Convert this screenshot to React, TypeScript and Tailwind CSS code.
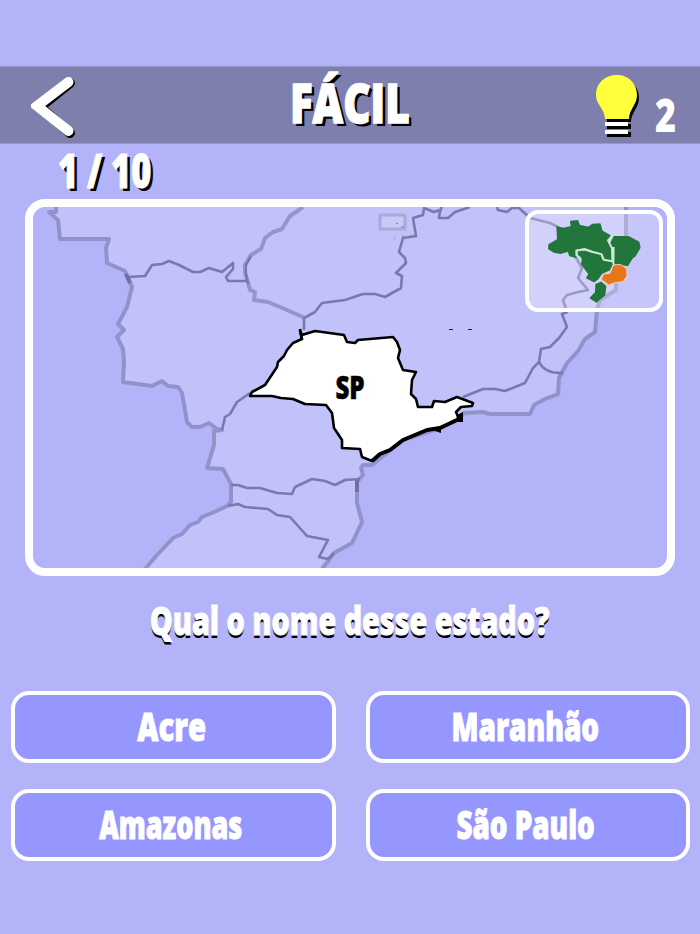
import { useState } from 'react';
import { clsx } from 'clsx';

const answers = [
  { label: 'Acre', scale: 'scale-x-[0.77]' },
  { label: 'Maranhão', scale: 'scale-x-[0.735]' },
  { label: 'Amazonas', scale: 'scale-x-[0.71]' },
  { label: 'São Paulo', scale: 'scale-x-[0.73]' },
];

const borders = [
  'M128 277L145 276L152 265L162 264L169 261L179 265L193 272L200 272L209 268L222 272L233 263L233 269L226 277L228 281L248 281',
  'M304 330L304 318L315 312L322 303L345 300L363 294L375 294L385 297L401 288L402 276L396 273L406 263L405 258L399 252L403 238L416 236L413 218L423 215L424 208L434 212L440 210L439 218L448 218L455 212L470 207M442 206L440 212',
  'M497 207L498 210L507 212L512 208L519 208L530 218L550 223L558 227L582 268L578 278L588 290L578 292L567 295L563 300L567 312L562 314L567 327L559 338L550 347L541 349L539 362L533 368L525 383L505 391L495 389L483 389L463 397',
  'M539 362Q545 374 563 373',
  'M231 485L238 485L247 488L260 488L277 493L292 494L295 487L312 479L325 481L335 485L345 480L360 479',
  'M228 506L238 504L245 507L268 509L277 515L290 517L307 536L328 540L319 557L328 559L334 553',
  'M250 393L237 402L230 414L225 417L222 430',
];

const saoPaulo =
  'M300 331L302 335L315 331L344 335L347 342L355 343L358 340L393 337L397 342L400 350L398 358L403 370L416 372L412 380L411 394L416 399L418 407L432 407L434 401L445 402L457 397L473 403L472 406L461 407L456 412L459 419L440 428L427 430L403 440L390 450L380 454L372 461L362 457L360 449L342 448L342 440L334 428L332 413L326 405L305 404L293 399L281 398L272 396L250 396L252 392L265 385L277 367L278 362L284 356L287 350L293 343L302 339Z';

const coast =
  'M626 206L626 240L616 283L616 290L600 300L597 310L595 332L585 339L578 351L567 363L559 378L558 394L545 399L534 405L530 414L490 414L483 412L464 413L459 419L440 428L403 440L372 465L363 465L361 468L363 475L357 482L357 503L362 522L352 543L334 553L322 569';

const westBorder =
  'L145 569L157 555L173 538L182 534L190 525L198 522L202 517L212 513L227 506L231 502L231 484L223 469L207 468L214 445L214 431L222 430L217 429L209 423L200 427L192 427L187 422L182 393L178 387L168 386L162 381L152 386L123 382L124 362L123 349L117 337L124 330L118 324L127 307L132 287L125 271L107 263L106 248L109 239L60 239L58 220L49 212L56 212L56 206';

function BackIcon() {
  return (
    <svg width="46" height="66" viewBox="0 0 46 66" fill="none" strokeLinecap="round" strokeWidth="10">
      <path d="M39 11L9 35L39 61" stroke="#000" />
      <path d="M37.500 10L6 34L37.500 59" stroke="#fff" />
    </svg>
  );
}

function BulbIcon() {
  const bulb = 'M21 0C9 0 0 8 0 20C0 30 9 34 9 44H33C33 34 41 30 41 20C41 8 32 0 21 0Z';
  return (
    <svg width="44" height="64" viewBox="0 0 44 64">
      <g transform="translate(2 3)">
        <path d={bulb} />
        <path d="M9 46H33V51H9ZM9 54H33V59H9Z" />
      </g>
      <path d={bulb} fill="#ffff3c" />
      <path d="M9 47H32V51H9ZM9 55H32V59H9Z" fill="#fff" />
    </svg>
  );
}

function StateMap() {
  return (
    <svg className="block h-full w-full" viewBox="33 207 634 361" fill="none" strokeLinejoin="round">
      <path d={coast + westBorder + 'Z'} fill="#c2c2fb" />
      <path d={coast} stroke="#9292ca" strokeWidth="4" />
      <path d={'M322 569M145 569' + westBorder} stroke="#9292ca" strokeWidth="4" />
      {/* divisa oeste de Goiás */}
      <path
        d="M303 207L299 210L290 216L282 229L273 232L265 238L261 249L251 255L245 265L245 273L248 282L250 290L255 292L254 300L268 302L287 310L305 318"
        stroke="#9595c6"
        strokeWidth="4"
      />
      <path d="M251 256L246 265L246 274L248 284" stroke="#7575a8" strokeWidth="2" />
      {borders.map((d) => (
        <path key={d} d={d} stroke="#7979ae" strokeWidth="2.6" />
      ))}
      <path d="M126 274L130 283M357 480L357 492" stroke="#7070a4" strokeWidth="4" />
      <rect x="380" y="215" width="25" height="14" fill="#c9c9fa" stroke="#aaaad5" strokeWidth="3" />
      <path d="M396 223.500H398M401 227H404M394 238H395M402 236H404" stroke="#8080b0" />
      <path d="M449 329.500H453M468 329.500H472" stroke="#222" />
      <path d={saoPaulo} fill="#fff" stroke="#000" strokeWidth="2.6" />
      <path d="M372 461L380 454L390 450L403 440L427 430L440 428L459 419" stroke="#000" strokeWidth="4" />
      <path d="M457 415L463 412V422H456ZM436 427L441 426V433L435 431Z" fill="#000" />
      <path d="M300 329L302 340" stroke="#000" strokeWidth="2.600" />
    </svg>
  );
}

function MiniMap() {
  return (
    <div className="absolute top-[3px] right-1 h-[102px] w-[138px] rounded-[13px] border-4 border-white bg-white/25">
      <svg className="block h-full w-full" viewBox="27 27 390 282" strokeLinejoin="round">
        <g fill="#23763b" stroke="#23763b" strokeWidth="4">
          <path d="M111 66L130 70L154 65L152 49L173 47L178 61L205 67L218 58L240 57L246 78L270 92L260 107L272 120L275 165L251 162L248 146L221 139L194 130L165 132L168 157L149 152L145 138L121 145L101 141L86 131L87 119L113 104Z" />
          <path d="M282 95L325 95L356 111L360 128L345 153L336 160L323 181L285 177L279 141L270 121Z" />
          <path d="M174 139L195 139L217 145L240 149L245 165L278 174L268 195L245 205L233 222L222 230L200 219L207 207L185 177L188 157L178 158Z" />
          <path d="M228 238L243 232L257 244L254 270L229 291L211 279L227 262Z" />
        </g>
        <path
          d="M182 160L169 150L169 137L193 132L219 141L245 148L251 164L277 169L276 130L264 106L278 91M281 126L280 177"
          fill="none"
          stroke="#c7ead3"
          strokeWidth="6"
        />
        <path
          d="M279 182L290 178L305 180L320 192L321 213L309 230L285 233L266 240L244 223L250 207L270 205Z"
          fill="#e9751b"
          stroke="#f2d1ba"
          strokeWidth="3"
        />
      </svg>
    </div>
  );
}

export default function App() {
  const [selected, setSelected] = useState<string | null>(null);

  return (
    <div className="h-[934px] w-[700px] overflow-hidden bg-[#b3b3fa] pt-[66px] font-['Open_Sans',sans-serif] font-extrabold text-white select-none">
      <header className="grid h-[78px] grid-cols-3 items-center border-y border-[#9696cc] bg-[#7f7fae]">
        <button className="ml-[31px] w-fit" aria-label="Voltar">
          <BackIcon />
        </button>
        <h1 className="flex justify-center pb-1.5 text-[54px] leading-none">
          <span className="scale-x-[0.78] [-webkit-text-stroke:1.5px_white] [text-shadow:4px_3px_0_#000]">FÁCIL</span>
        </h1>
        <div className="mr-[17px] flex items-center justify-end gap-[15px]">
          <div className="pt-[3px]">
            <BulbIcon />
          </div>
          <span className="mt-[18px] w-[28px] origin-left scale-x-[0.78] text-[46px] leading-none">2</span>
        </div>
      </header>

      <div className="flex h-[55px] items-center pb-0.5 pl-[58px] text-[47px] leading-none">
        <span className="origin-left scale-x-[0.73] whitespace-nowrap [-webkit-text-stroke:1px_white] [text-shadow:4px_3px_0_#000]">
          1 / 10
        </span>
      </div>

      <div className="relative mx-auto h-[377px] w-[650px] overflow-hidden rounded-[20px] border-8 border-white">
        <StateMap />
        <span className="absolute top-[165px] left-[317px] -translate-x-1/2 scale-x-[0.78] text-[31px] leading-none text-black [-webkit-text-stroke:0.5px_black]">
          SP
        </span>
        <MiniMap />
      </div>

      <p className="flex h-[115px] items-center justify-center pb-7 text-[38px] leading-none whitespace-nowrap">
        <span className="scale-x-[0.755] [-webkit-text-stroke:1px_white] [text-shadow:0_3px_0_#000]">
          Qual o nome desse estado?
        </span>
      </p>

      <div className="grid grid-cols-2 gap-x-[30px] gap-y-[26px] pr-[10px] pl-[11px]">
        {answers.map(({ label, scale }) => (
          <button
            key={label}
            onClick={() => setSelected(label)}
            className={clsx(
              'flex h-[72px] items-center justify-center rounded-[18px] border-4 border-white pr-1 pb-[3px] text-[38px] leading-none',
              selected === label ? 'bg-[#7c7cf0]' : 'bg-[#9696ff]'
            )}
          >
            <span className={clsx('whitespace-nowrap [-webkit-text-stroke:1px_white]', scale)}>{label}</span>
          </button>
        ))}
      </div>
    </div>
  );
}
